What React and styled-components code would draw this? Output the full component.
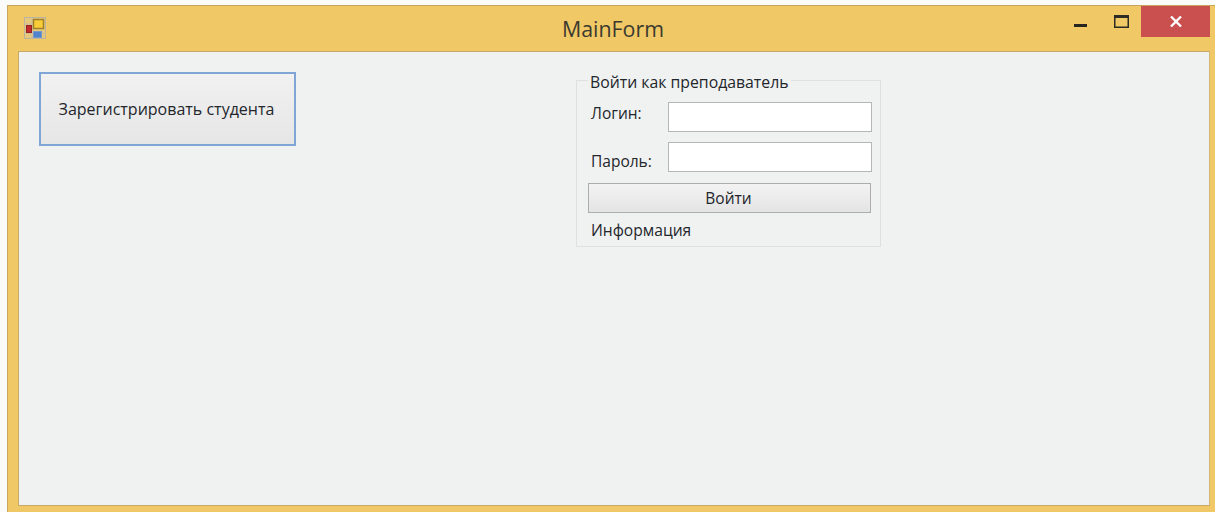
import React from 'react';
import styled, { createGlobalStyle } from 'styled-components';

const GlobalStyle = createGlobalStyle`
  html, body {
    margin: 0;
    padding: 0;
    background: #fbfbfa;
    overflow: hidden;
  }
  body {
    font-family: "Open Sans", "Noto Sans", sans-serif;
    color: #23262b;
  }
`;

const AppIcon = () => (
  <svg width="22" height="22" viewBox="0 0 22 22">
    <rect x="0.5" y="0.5" width="21" height="21" fill="#e6c87c" stroke="#b9b3a0" />
    <path d="M0 7h8M8 0v22M0 16h22" stroke="#c4bca4" strokeWidth="1" />
    <rect x="9.5" y="2.5" width="10" height="9" fill="#f8cd38" stroke="#a07f2a" strokeWidth="1.5" />
    <rect x="2.5" y="8.5" width="5" height="7" fill="#c4292b" stroke="#922323" />
    <rect x="9.5" y="14.5" width="8" height="6" fill="#4f84cc" stroke="#7498c8" />
  </svg>
);

const MinimizeIcon = () => (
  <svg width="13" height="3" viewBox="0 0 13 3">
    <rect width="13" height="3" fill="#26251f" />
  </svg>
);

const MaximizeIcon = () => (
  <svg width="15" height="13" viewBox="0 0 15 13">
    <rect x="0.75" y="0.75" width="13.5" height="11.5" fill="none" stroke="#2c2b25" strokeWidth="1.5" />
    <rect x="0" y="0" width="15" height="3" fill="#2c2b25" />
  </svg>
);

const CloseIcon = () => (
  <svg width="14" height="13" viewBox="0 0 14 13">
    <path d="M2 1.5l10 10M12 1.5l-10 10" stroke="#fff" strokeWidth="2.4" />
  </svg>
);

const Page = styled.div`
  box-sizing: border-box;
  width: 1215px;
  height: 512px;
  padding: 5px 0 0 7px;
`;

const Window = styled.div`
  box-sizing: border-box;
  height: 100%;
  display: flex;
  flex-direction: column;
  background: #f0c866;
  border-top: 1px solid #c6a45c;
  border-left: 1px solid #c9a75e;
`;

const TitleBar = styled.header`
  height: 45px;
  flex: none;
  display: grid;
  grid-template-columns: 1fr auto 1fr;
  align-items: start;
`;

const IconSlot = styled.div`
  padding: 11px 0 0 16px;
  line-height: 0;
`;

const Title = styled.h1`
  margin: 10px 0 0 3px;
  font-size: 21.4px;
  line-height: 26px;
  font-weight: 400;
  color: #3c3a30;
`;

const Controls = styled.div`
  justify-self: end;
  display: flex;
  align-items: flex-start;
  margin-right: 5px;
`;

const SizeButtons = styled.div`
  display: flex;
  align-items: flex-start;
  gap: 10px;
`;

const ControlButton = styled.div`
  display: flex;
  justify-content: center;
  padding-top: ${(p) => p.$top}px;
  width: ${(p) => p.$width}px;
  line-height: 0;
`;

const CloseButton = styled.div`
  display: flex;
  align-items: center;
  justify-content: center;
  width: 69px;
  height: 31px;
  background: #c9504f;
`;

const Client = styled.main`
  flex: 1;
  box-sizing: border-box;
  margin: 0 5px 6px 10px;
  padding: 20px 20px 0;
  display: flex;
  align-items: flex-start;
  background: #f0f2f2;
  border: 1px solid #c7a866;
  border-right-color: #d2b675;
`;

const RegisterButton = styled.button`
  box-sizing: border-box;
  width: 257px;
  height: 74px;
  padding: 0 2px 0 0;
  flex: none;
  font: inherit;
  font-size: 16px;
  color: #23262b;
  background: linear-gradient(#f1f1f1, #e6e6e6);
  border: 2px solid #80a6d8;
`;

const GroupBox = styled.fieldset`
  box-sizing: border-box;
  width: 305px;
  height: 177px;
  margin: -2px 0 0 280px;
  padding: 0 8px 0 12px;
  flex: none;
  border: 1px solid #dfe1e1;
`;

const GroupTitle = styled.legend`
  padding: 0 2px;
  margin-left: -1px;
  font-size: 15.8px;
  line-height: 20px;
  transform: translateY(2px);
`;

const FieldRow = styled.div`
  display: flex;
  align-items: center;
  justify-content: space-between;
  height: 30px;
  margin-top: ${(p) => p.$gap}px;
`;

const FieldLabel = styled.label`
  margin-left: 2px;
  font-size: 15.5px;
  transform: translateY(${(p) => p.$shift}px);
`;

const FieldInput = styled.input`
  box-sizing: border-box;
  width: 204px;
  height: 30px;
  padding: 0 4px;
  background: #fff;
  border: 1px solid #b4b6b8;
  outline: none;
`;

const SubmitButton = styled.button`
  box-sizing: border-box;
  display: block;
  width: 283px;
  height: 30px;
  margin: 11px 0 0 -1px;
  padding: 0 2px 0 0;
  font: inherit;
  font-size: 15.5px;
  color: #23262b;
  background: linear-gradient(#f3f3f3, #e4e4e4);
  border: 1px solid #adadad;
`;

const InfoText = styled.div`
  margin: 7px 0 0 2px;
  font-size: 15.6px;
  line-height: 21px;
`;

export default function App() {
  return (
    <>
      <GlobalStyle />
      <Page>
        <Window>
          <TitleBar>
            <IconSlot>
              <AppIcon />
            </IconSlot>
            <Title>MainForm</Title>
            <Controls>
              <SizeButtons>
                <ControlButton $width={23} $top={18}>
                  <MinimizeIcon />
                </ControlButton>
                <ControlButton $width={39} $top={9}>
                  <MaximizeIcon />
                </ControlButton>
              </SizeButtons>
              <CloseButton>
                <CloseIcon />
              </CloseButton>
            </Controls>
          </TitleBar>
          <Client>
            <RegisterButton>Зарегистрировать студента</RegisterButton>
            <GroupBox>
              <GroupTitle>Войти как преподаватель</GroupTitle>
              <FieldRow $gap={12}>
                <FieldLabel $shift={-4}>Логин:</FieldLabel>
                <FieldInput type="text" />
              </FieldRow>
              <FieldRow $gap={10}>
                <FieldLabel $shift={4}>Пароль:</FieldLabel>
                <FieldInput type="password" />
              </FieldRow>
              <SubmitButton>Войти</SubmitButton>
              <InfoText>Информация</InfoText>
            </GroupBox>
          </Client>
        </Window>
      </Page>
    </>
  );
}
